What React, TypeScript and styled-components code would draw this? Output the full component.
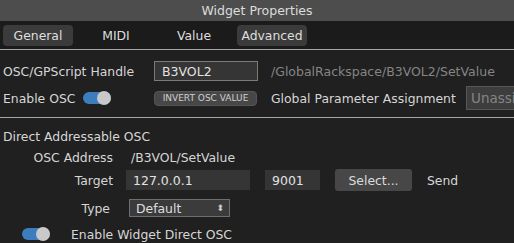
import { FC } from 'react';
import styled, { createGlobalStyle } from 'styled-components';

const GlobalStyle = createGlobalStyle`
  html, body {
    margin: 0;
    padding: 0;
    background: #202020;
  }
  body {
    font-family: "DejaVu Sans", Verdana, sans-serif;
    font-size: 12.4px;
    color: #d6d6d6;
  }
`;

const Window = styled.div`
  width: 514px;
  height: 243px;
  overflow: hidden;
  background: #202020;
  display: flex;
  flex-direction: column;
`;

const TitleBar = styled.div`
  height: 21px;
  background: #4d4d4d;
  color: #dcdcdc;
  font-size: 12.5px;
  display: flex;
  align-items: center;
  justify-content: center;
`;

const TabBar = styled.div`
  height: 28px;
  background: #1b1b1b;
  display: flex;
  align-items: center;
  gap: 8px;
  padding: 0 3px;
  border-bottom: 1px solid #a6a6a6;
`;

const Tab = styled.div<{ $active?: boolean }>`
  width: 70px;
  height: 21px;
  display: flex;
  align-items: center;
  justify-content: center;
  border-radius: 4px;
  background: ${p => (p.$active ? '#3b3b3b' : 'transparent')};
  color: #dedede;
`;

const Section = styled.div<{ $bottomLine?: boolean }>`
  display: flex;
  flex-direction: column;
  gap: 5px;
  padding: 11px 0 7px 3px;
  border-bottom: ${p => (p.$bottomLine ? '1px solid #a6a6a6' : 'none')};
`;

const Row = styled.div<{ $h: number }>`
  display: grid;
  grid-template-columns: 151px 104px 13px 1fr;
  align-items: center;
  height: ${p => p.$h}px;
`;

const Field = styled.div<{ $w?: number; $border?: boolean }>`
  height: 20px;
  box-sizing: border-box;
  width: ${p => (p.$w ? `${p.$w}px` : 'auto')};
  background: #353535;
  border: ${p => (p.$border ? '1px solid #7a7a7a' : 'none')};
  display: flex;
  align-items: center;
  padding-left: 7px;
  color: #e2e2e2;
  font-size: 12.5px;
`;

const PathText = styled.span`
  grid-column: 4;
  color: #858585;
  font-size: 12.5px;
  white-space: nowrap;
`;

const Inline = styled.div<{ $gap: number }>`
  display: flex;
  align-items: center;
  gap: ${p => p.$gap}px;
`;

const Track = styled.div`
  position: relative;
  width: 28px;
  height: 12px;
  border-radius: 6px;
  background: #3c7dbd;
`;

const Knob = styled.div`
  position: absolute;
  right: 0;
  top: -1px;
  width: 14px;
  height: 14px;
  border-radius: 50%;
  background: #c9c9c9;
`;

const SmallButton = styled.div`
  width: 103px;
  height: 15px;
  box-sizing: border-box;
  border-radius: 4px;
  background: #474747;
  border: 1px solid #555;
  color: #cfcfcf;
  font-size: 9px;
  display: flex;
  align-items: center;
  justify-content: center;
  white-space: nowrap;
`;

const ParamCell = styled.div`
  grid-column: 4;
  display: flex;
  align-items: center;
  justify-content: space-between;
  white-space: nowrap;
`;

const Unassigned = styled.div`
  width: 52px;
  height: 24px;
  box-sizing: border-box;
  background: #3d3d3d;
  border: 1px solid #575757;
  border-right: none;
  color: #858585;
  font-size: 13.5px;
  display: flex;
  align-items: center;
  padding-left: 4px;
  overflow: hidden;
  margin-right: -4px;
`;

const DirectSection = styled.div`
  display: flex;
  flex-direction: column;
  gap: 4px;
  padding: 9px 0 0 3px;
`;

const Heading = styled.div`
  height: 18px;
  display: flex;
  align-items: center;
`;

const FormRow = styled.div<{ $h: number }>`
  display: grid;
  grid-template-columns: 110px auto;
  column-gap: 13px;
  align-items: center;
  height: ${p => p.$h}px;
`;

const Label = styled.span<{ $pr?: number }>`
  text-align: right;
  padding-right: ${p => p.$pr ?? 0}px;
`;

const Value = styled.span`
  padding-left: 5px;
`;

const Button = styled.div`
  width: 77px;
  height: 22px;
  border-radius: 3px;
  background: #474747;
  display: flex;
  align-items: center;
  justify-content: center;
  color: #dcdcdc;
`;

const Select = styled.div`
  width: 101px;
  height: 18px;
  box-sizing: border-box;
  background: #3b3b3b;
  border: 1px solid #6e6e6e;
  display: flex;
  align-items: center;
  justify-content: space-between;
  padding: 0 5px 0 6px;
  margin-left: 3px;
  color: #dedede;
`;

const Arrows = styled.span`
  font-size: 9px;
  line-height: 1;
  color: #cfcfcf;
`;

const ToggleRow = styled.div`
  height: 14px;
  display: flex;
  align-items: center;
  gap: 21px;
  padding-left: 19px;
`;

const Toggle: FC = () => (
  <Track>
    <Knob />
  </Track>
);

const tabs = ['General', 'MIDI', 'Value', 'Advanced'];

export default function App() {
  return (
    <>
      <GlobalStyle />
      <Window>
        <TitleBar>Widget Properties</TitleBar>
        <TabBar>
          {tabs.map(t => (
            <Tab key={t} $active={t === 'General' || t === 'Advanced'}>{t}</Tab>
          ))}
        </TabBar>

        <Section $bottomLine>
          <Row $h={20}>
            <span>OSC/GPScript Handle</span>
            <Field $border>B3VOL2</Field>
            <span />
            <PathText>/GlobalRackspace/B3VOL2/SetValue</PathText>
          </Row>
          <Row $h={24}>
            <Inline $gap={8}>
              <span>Enable OSC</span>
              <Toggle />
            </Inline>
            <SmallButton>INVERT OSC VALUE</SmallButton>
            <span />
            <ParamCell>
              <span>Global Parameter Assignment</span>
              <Unassigned>Unassig</Unassigned>
            </ParamCell>
          </Row>
        </Section>

        <DirectSection>
          <Heading>Direct Addressable OSC</Heading>
          <FormRow $h={16}>
            <Label>OSC Address</Label>
            <Value>/B3VOL/SetValue</Value>
          </FormRow>
          <FormRow $h={20}>
            <Label>Target</Label>
            <Inline $gap={15}>
              <Field $w={124}>127.0.0.1</Field>
              <Field $w={55}>9001</Field>
              <Button>Select...</Button>
              <span>Send</span>
            </Inline>
          </FormRow>
          <FormRow $h={30}>
            <Label $pr={3}>Type</Label>
            <Select>
              <span>Default</span>
              <Arrows>⬍</Arrows>
            </Select>
          </FormRow>
          <ToggleRow>
            <Toggle />
            <span>Enable Widget Direct OSC</span>
          </ToggleRow>
        </DirectSection>
      </Window>
    </>
  );
}
